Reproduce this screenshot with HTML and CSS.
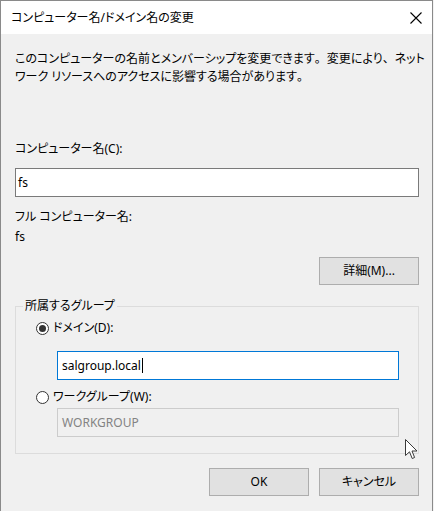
FILE: index.html
```html
<!DOCTYPE html>
<html lang="ja">
<head>
<meta charset="utf-8">
<title>コンピューター名/ドメイン名の変更</title>
<link rel="stylesheet" href="styles.css">
</head>
<body>
<div class="window">
  <div class="titlebar">
    <span class="title">コンピューター名/ドメイン名の変更</span>
    <svg class="close" width="12" height="12" viewBox="0 0 12 12"><path d="M0.5 0.5 L11.5 11.5 M11.5 0.5 L0.5 11.5" stroke="#000" stroke-width="1.1" fill="none"/></svg>
  </div>
  <div class="content">
    <p class="desc">このコンピューターの名前とメンバーシップを変更できます<span class="fw">。</span>変更により<span class="fw">、</span>ネット<br>ワーク リソースへのアクセスに影響する場合があります<span class="fw">。</span></p>
    <div class="label label-first">コンピューター名(C):</div>
    <div class="input">fs</div>
    <div class="label label-full">フル コンピューター名:</div>
    <div class="value">fs</div>
    <div class="row-right"><span class="button">詳細(M)...</span></div>
    <fieldset class="group">
      <legend class="legend">所属するグループ</legend>
      <div class="radio-row radio-row-first"><span class="radio checked"></span><span>ドメイン(D):</span></div>
      <div class="input input-group input-focus">salgroup.local<span class="caret"></span></div>
      <div class="radio-row radio-row-second"><span class="radio"></span><span>ワークグループ(W):</span></div>
      <div class="input input-group input-disabled">WORKGROUP</div>
    </fieldset>
    <div class="actions"><span class="button">OK</span><span class="button">キャンセル</span></div>
  </div>
  <svg class="cursor" width="14" height="22" viewBox="0 0 14 22"><path d="M0.5 0.5 L0.5 16.5 L4.5 12.8 L7.2 19.5 L9.6 18.5 L7 12 L12 12 Z" fill="#fff" stroke="#3a3a3a" stroke-width="1" stroke-linejoin="round"/></svg>
</div>
</body>
</html>
```
FILE: styles.css
```css
html, body {
  margin: 0;
  padding: 0;
  background: #f3f3f3;
}
body {
  font-family: "Noto Sans", "Noto Sans CJK JP", sans-serif;
  font-size: 12px;
  line-height: 18px;
  color: #000;
  font-feature-settings: "palt";
}
.window {
  position: relative;
  width: 433px;
  height: 511px;
  box-sizing: border-box;
  border: 1px solid #8a8a8a;
  border-bottom: none;
  background: #f0f0f0;
  overflow: hidden;
}
.titlebar {
  height: 33px;
  background: #fff;
  display: flex;
  align-items: center;
  justify-content: space-between;
  padding: 0 10px 0 10px;
}
.title {
  padding-top: 1px;
}
.close {
  display: block;
  margin-top: 1px;
}
.content {
  padding: 16px 13px 0 14px;
}
.desc {
  margin: 0;
  white-space: nowrap;
}
.fw {
  font-feature-settings: normal;
}
.label-first {
  margin-top: 54px;
}
.input {
  box-sizing: border-box;
  height: 29px;
  border: 1px solid #7a7a7a;
  background: #fff;
  padding: 0 2px;
  display: flex;
  align-items: center;
  margin-top: 10px;
}
.label-full {
  margin-top: 11px;
}
.value {
  margin-top: 2px;
}
.row-right {
  margin-top: 11px;
  display: flex;
  justify-content: flex-end;
}
.button {
  box-sizing: border-box;
  width: 100px;
  height: 28px;
  border: 1px solid #adadad;
  background: #e1e1e1;
  display: flex;
  align-items: center;
  justify-content: center;
}
.group {
  margin: 12px 0 0 0;
  padding: 0 19px 16px 20px;
  border: 1px solid #dcdcdc;
  min-width: 0;
}
.legend {
  margin-left: -13px;
  padding: 0 2px;
}
.radio-row {
  display: flex;
  align-items: center;
  height: 18px;
}
.radio-row-first {
  margin-top: 4px;
}
.radio-row-second {
  margin-top: 8px;
}
.radio {
  box-sizing: border-box;
  width: 13px;
  height: 13px;
  border: 1px solid #333;
  border-radius: 50%;
  background: #fff;
  margin-right: 4px;
  display: flex;
  align-items: center;
  justify-content: center;
}
.radio.checked::after {
  content: "";
  width: 7px;
  height: 7px;
  border-radius: 50%;
  background: #333;
}
.input-group {
  margin-left: 21px;
  padding: 0 4px;
}
.input-focus {
  margin-top: 14px;
  border-color: #0078d7;
}
.caret {
  display: inline-block;
  width: 1px;
  height: 15px;
  background: #000;
  margin-left: 1px;
}
.input-disabled {
  margin-top: 2px;
  background: #f0f0f0;
  border-color: #cccccc;
  color: #838383;
}
.actions {
  margin-top: 14px;
  display: flex;
  justify-content: flex-end;
  gap: 10px;
}
.cursor {
  position: absolute;
  left: 404px;
  top: 438px;
}
```
